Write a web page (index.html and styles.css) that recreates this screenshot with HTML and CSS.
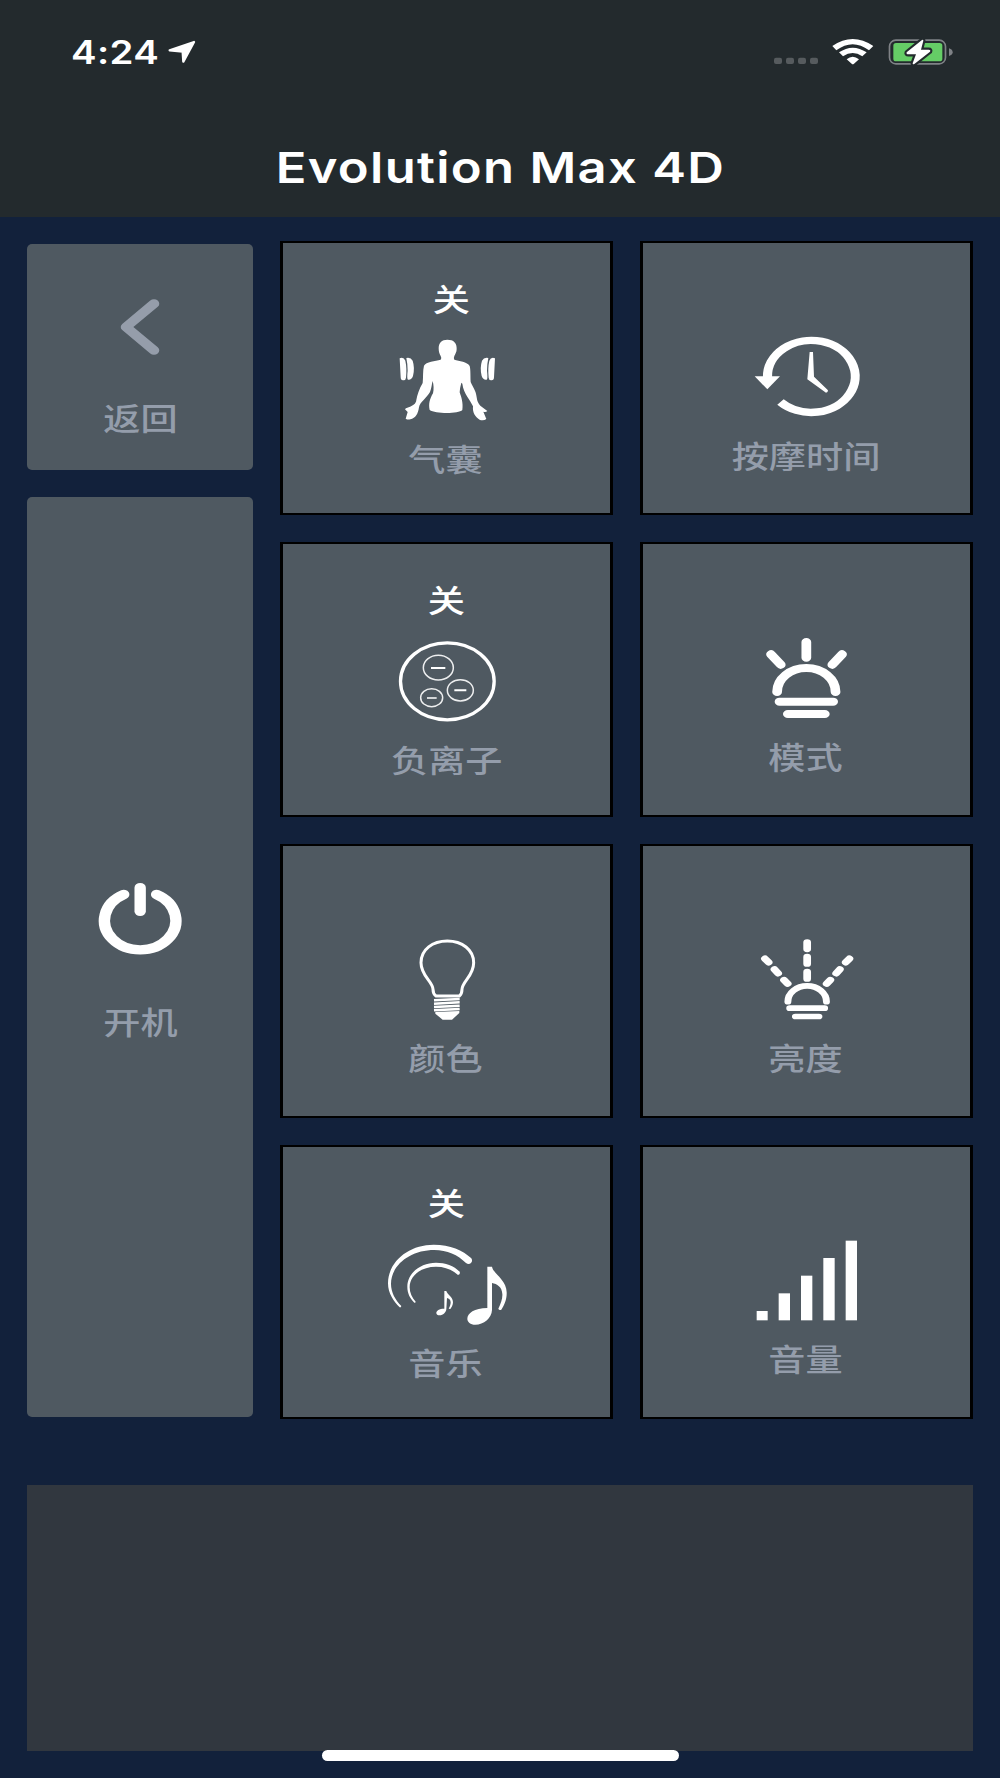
FILE: index.html
```html
<!DOCTYPE html>
<html lang="zh-CN">
<head>
  <meta charset="UTF-8">
  <title>Evolution Max 4D</title>
  <link rel="stylesheet" href="styles.css">
</head>
<body>

  <header class="header">
    <div class="status-bar">
      <div class="status-left">
        <span class="time">4:24</span>
        <svg class="location" width="28" height="24" viewBox="503 120 84 72">
          <path d="M581 126 L508 151 L547 155 L549 185 Z" fill="#fff" stroke="#fff" stroke-width="7" stroke-linejoin="round"/>
        </svg>
      </div>
      <div class="status-right">
        <svg width="44" height="28" viewBox="825 114 132 84" fill="#565b5e">
          <rect x="825" y="173" width="24" height="19" rx="6"/>
          <rect x="861" y="173" width="24" height="19" rx="6"/>
          <rect x="897" y="173" width="24" height="19" rx="6"/>
          <rect x="933" y="173" width="24" height="19" rx="6"/>
        </svg>
        <svg width="42" height="28" viewBox="999 114 126 84" fill="#fff">
          <path d="M1000 138 Q1061 96 1123 138 L1110 151 Q1061 114 1012 151 Z"/>
          <path d="M1020 157 Q1061 129 1103 157 L1090 169 Q1061 149 1032 169 Z"/>
          <path d="M1043 178 Q1061 162 1080 178 L1065 191 Q1061 194 1058 191 Z"/>
        </svg>
        <svg width="65" height="28" viewBox="1165 114 195 84">
          <rect x="1169.500" y="120.500" width="168" height="71" rx="19" fill="none" stroke="#7f8286" stroke-width="5"/>
          <path d="M1348 145 Q1359 149 1359 156.500 Q1359 164 1348 168 Z" fill="#7f8286"/>
          <rect x="1181" y="129" width="147" height="55" rx="8" fill="#65cd66"/>
          <path d="M1267 120 L1221 157 Q1219 163 1226 163 L1249 163 L1239 190 Q1239 194 1244 192 L1291 155 Q1294 149 1287 149 L1264 149 L1271 122 Q1271 118 1267 120 Z" fill="#fff" stroke="#232a2d" stroke-width="13" stroke-linejoin="round" paint-order="stroke"/>
        </svg>
      </div>
    </div>
    <h1 class="title"><span>Evolution Max 4D</span></h1>
  </header>

  <main class="panel">
    <aside class="side">
      <button class="side-btn back">
        <svg width="44" height="60" viewBox="354 231 132 180">
          <g transform="translate(378 321) scale(1.218 1)" fill="none" stroke="#959daa" stroke-width="26" stroke-linecap="round" stroke-linejoin="round">
            <path d="M69 -70 L0 0 L69 70"/>
          </g>
        </svg>
        <span class="label">返回</span>
      </button>
      <button class="side-btn power">
        <svg width="84" height="74" viewBox="295 96 252 222">
          <g transform="translate(421.500 212) scale(1.218 1)" fill="none" stroke="#fff" stroke-width="28" stroke-linecap="round">
            <path d="M-40.500 -78.500 A88 88 0 1 0 40.500 -78.500"/>
            <path d="M0 -99 V-28"/>
          </g>
        </svg>
        <span class="label">开机</span>
      </button>
    </aside>

    <section class="grid">
      <!-- 气囊 -->
      <button class="tile has-state">
        <span class="state shifted">关</span>
        <svg class="icon" viewBox="350 328 360 252" fill="#fff">
          <path d="M531 327 C550 327 560 337 559 355 C559 365 555 369 552 376 Q549 382 552 387 C566 391 591 393 598 406 C601 416 600 435 601 454 C608 470 617 480 619 500 Q621 517 630 525 L651 541 Q646 546 639 543 L648 565 Q641 571 629 568 C615 560 606 546 608 527 C600 507 580 490 576 459 L573 456 Q569 470 568 485 C573 500 579 516 576 538 C565 550 495 550 478 538 C474 520 478 505 488 488 C491 475 490 463 487 451 C484 460 484 472 479 484 C470 501 448 515 446 530 C443 550 436 562 420 566 Q412 568 406 564 L412 544 L404 536 Q404 533 415 530 C427 525 437 520 438 508 C441 493 446 476 457 457 C459 440 457 420 461 405 C467 393 495 391 511 387 Q515 382 511 376 C507 370 505 362 505 353 C505 337 514 327 531 327 Z"/>
          <path id="plates" d="M388 383 Q400 378 405 390 Q410 412 407 441 Q406 450 398 449 Q391 449 391 440 Z M408 382 Q421 379 427 390 Q434 412 428 436 Q423 449 413 447 Q409 445 412 420 Q412 400 408 382 Z"/>
          <use href="#plates" transform="translate(1062 0) scale(-1 1)"/>
        </svg>
        <span class="label">气囊</span>
      </button>

      <!-- 按摩时间 -->
      <button class="tile">
        <svg class="icon" viewBox="350 319 360 252" fill="#fff">
          <g transform="translate(543 438) scale(1.218 1)" fill="none" stroke="#fff" stroke-width="22.500">
            <path d="M-108 2 A108 108 0 1 1 -76 76"/>
          </g>
          <path d="M373 437 H449 L411 476 Z"/>
          <path d="M538 364 H548 L551 438 L593 479 Q593 486 587 486 L531 446 Z"/>
        </svg>
        <span class="label">按摩时间</span>
      </button>

      <!-- 负离子 -->
      <button class="tile has-state">
        <span class="state">关</span>
        <svg class="icon" viewBox="350 331 360 252" fill="none" stroke="#fff">
          <ellipse cx="531" cy="452" rx="140.500" ry="115.500" stroke-width="10"/>
          <g stroke-width="4.500" opacity=".9">
            <ellipse cx="504" cy="411" rx="45" ry="37"/>
            <ellipse cx="570" cy="479" rx="39" ry="32"/>
            <ellipse cx="484" cy="501" rx="33" ry="27"/>
          </g>
          <path d="M482 412 H525 M552 479 H588" stroke-width="6"/>
          <path d="M470 502 H499" stroke-width="5" opacity=".9"/>
        </svg>
        <span class="label centered">负离子</span>
      </button>

      <!-- 模式 -->
      <button class="tile">
        <svg class="icon" viewBox="350 322 360 252">
          <g transform="translate(528 484) scale(1.218 1)" fill="none" stroke="#fff" stroke-width="24" stroke-linecap="round">
            <path d="M-72 0 A72 72 0 0 1 72 0"/>
            <path d="M-66 29 H66 M-45.500 66 H45.500"/>
            <path d="M0 -150 V-103 M-87 -113 L-63 -82 M88 -113 L64 -82"/>
          </g>
        </svg>
        <span class="label">模式</span>
      </button>

      <!-- 颜色 -->
      <button class="tile">
        <svg class="icon" viewBox="350 325 360 252" fill="none" stroke="#fff">
          <path d="M497 496 Q488 490 488 476 C487 452 452 436 452 396 C452 356 487 331 531 331 C575 331 610 357 610 396 C610 436 576 452 575 476 Q575 490 567 496 Z" stroke-width="9"/>
          <path d="M491 509 L568 505 M491 519 L568 515 M491 529 L568 525 M491 539 L568 535" stroke-width="7.500"/>
          <path d="M495 544 L567 541 V547 L545 567 H517 L495 549 Z" fill="#fff" stroke="none"/>
        </svg>
        <span class="label">颜色</span>
      </button>

      <!-- 亮度 -->
      <button class="tile">
        <svg class="icon" viewBox="350 325 360 252">
          <g transform="translate(530.500 513) scale(1.218 1)" fill="none" stroke="#fff" stroke-width="17" stroke-linecap="round">
            <path d="M-47.500 0 A47.500 47.500 0 0 1 47.500 0"/>
            <path d="M-43 19.500 H43 M-29 44.500 H29"/>
            <g stroke-width="19">
              <path d="M0 -178 V-158 M0 -134 V-114 M0 -89 V-69"/>
              <path d="M-104 -129 L-95 -118 M-80.500 -97 L-71.500 -85 M-57 -65 L-48 -54"/>
              <path d="M104 -129 L95 -118 M80.500 -97 L71.500 -85 M57 -65 L48 -54"/>
            </g>
          </g>
        </svg>
        <span class="label">亮度</span>
      </button>

      <!-- 音乐 -->
      <button class="tile has-state">
        <span class="state">关</span>
        <svg class="icon" viewBox="350 337 360 252" fill="#fff">
          <path d="M388 527 C370 510 353 485 353 455 C353 390 415 339 490 339 C540 339 577 355 603 380 Q608 388 602 394 Q595 400 587 394 C563 370 530 355 492 355 C420 355 362 400 362 457 C362 482 375 505 393 523 Q392 528 388 527 Z"/>
          <path d="M432 513 C419 500 411 485 411 465 C411 425 450 393 497 393 C525 393 551 402 568 420 Q571 428 563 430 C545 414 525 405 497 405 C452 405 418 432 418 467 C418 484 425 498 436 510 Q436 514 432 513 Z"/>
          <path d="M651 405 H665 C668 425 709 445 709 482 C710 502 702 520 693 534 Q686 537 684 531 C692 515 697 500 696 487 C695 465 680 457 665 454 V535 C664 560 640 579 615 579 C600 579 591 571 591 561 C591 545 612 529 651 529 Z"/>
          <path d="M522 478 H528 C529 487 548 495 548 512 C548 521 543 528 540 532 L535 531 C539 524 541 518 541 512 C541 503 535 500 530 499 L528 533 C527 543 518 551 508 551 C502 551 498 548 498 544 C498 537 506 531 522 531 Z"/>
        </svg>
        <span class="label">音乐</span>
      </button>

      <!-- 音量 -->
      <button class="tile">
        <svg class="icon" viewBox="350 328 360 252" fill="#fff">
          <rect x="379" y="541" width="33" height="28"/>
          <rect x="445" y="488" width="34" height="81"/>
          <rect x="512" y="435" width="34" height="134"/>
          <rect x="579" y="382" width="34" height="187"/>
          <rect x="646" y="330" width="34" height="239"/>
        </svg>
        <span class="label">音量</span>
      </button>
    </section>
  </main>

  <footer class="bottom">
    <div class="display"></div>
    <div class="home-bar"></div>
  </footer>

</body>
</html>
```
FILE: styles.css
```css
* {
  box-sizing: border-box;
}

body {
  margin: 0;
  width: 1000px;
  height: 1778px;
  overflow: hidden;
  background: #12213b;
  color: #fff;
  font-family: Inter, "Noto Sans CJK SC", sans-serif;
}

svg {
  display: block;
  overflow: visible;
}

button {
  border: none;
  padding: 0;
  margin: 0;
  color: inherit;
  font-family: inherit;
  cursor: pointer;
}

.header {
  height: 217px;
  background: #232a2d;
}

.status-bar {
  display: flex;
  justify-content: space-between;
  align-items: center;
  height: 104px;
  padding: 0 47px 0 71px;
}

.status-left {
  display: flex;
  align-items: center;
}

.time {
  width: 97px;
  padding-top: 2px;
  font-size: 32px;
  font-weight: 600;
  line-height: 40px;
  letter-spacing: 0.3px;
  transform: scaleX(1.2);
  transform-origin: left center;
}

.status-right {
  display: flex;
  align-items: center;
  gap: 14px;
}

.title {
  margin: 38px 0 0;
  font-size: 43px;
  font-weight: 600;
  line-height: 50px;
  text-align: center;
}

.title span {
  display: inline-block;
  letter-spacing: 1.1px;
  transform: scaleX(1.18);
}

.panel {
  display: flex;
  gap: 27px;
  padding: 24px 27px 0;
}

.side {
  display: flex;
  flex-direction: column;
  gap: 27px;
  width: 226px;
  padding-top: 3px;
}

.side-btn {
  display: flex;
  flex-direction: column;
  align-items: center;
  background: #4f5961;
  border-radius: 5px;
}

.back {
  height: 226px;
  padding-top: 53px;
}

.back .label {
  margin: 42px 0 0;
}

.power {
  height: 920px;
  padding-top: 385px;
}

.power .label {
  margin: 47px 0 0;
}

.grid {
  display: grid;
  grid-template-columns: 333px 333px;
  grid-auto-rows: 274.3px;
  gap: 27px;
}

.tile {
  display: flex;
  flex-direction: column;
  align-items: center;
  padding-top: 93.6px;
  background: #4f5961;
  border: 2px solid #000;
  border-width: 2px 3px;
}

.has-state {
  padding-top: 37px;
}

.icon {
  width: 120px;
  height: 84px;
}

.state,
.label {
  font-size: 30.5px;
  line-height: 40px;
  white-space: nowrap;
  transform: scaleX(1.218);
}

.state {
  margin-bottom: 20px;
  font-weight: 500;
}

.state.shifted {
  margin-left: 10px;
}

.label {
  margin: 16px 2px 0 0;
  color: #949dab;
  font-weight: 500;
}

.label.centered {
  margin-right: 0;
}

.bottom {
  display: flex;
  flex-direction: column;
  align-items: center;
  padding: 65.8px 27px 0;
}

.display {
  width: 946px;
  height: 266px;
  background: #31373f;
}

.home-bar {
  width: 357px;
  height: 11px;
  margin-top: -1px;
  border-radius: 6px;
  background: #fff;
}
```
